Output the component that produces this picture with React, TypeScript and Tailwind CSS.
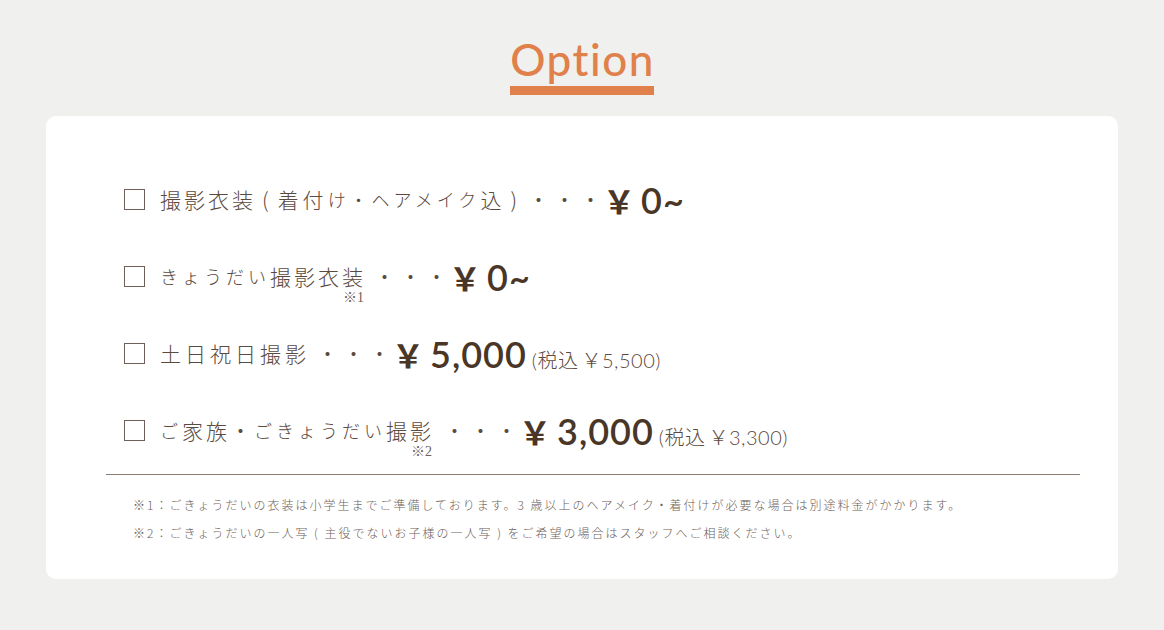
import React from 'react';

const jp = "font-['Noto_Sans_CJK_JP',sans-serif]";
const num = "font-['Lato','Noto_Sans_CJK_JP',sans-serif]";

function Box() {
  return <span className="inline-block w-[21px] h-[21px] border-[1.5px] border-[#6e6058] shrink-0" />;
}

function Note({ mark, children }: { mark: string; children: React.ReactNode }) {
  return (
    <span className="relative">
      {children}
      <span className="absolute right-[2px] top-[30px] text-[14px] leading-none tracking-normal text-[#6e6058] font-['Liberation_Serif','Noto_Sans_CJK_JP',serif]">
        {mark}
      </span>
    </span>
  );
}

function Price({ value, tax }: { value: string; tax?: string }) {
  return (
    <span className="flex items-baseline ml-[2px] tracking-normal">
      <span className={`${num} text-[32px] font-bold text-[#4a3626]`}>￥</span>
      <span className={`${num} text-[36px] font-semibold text-[#4a3626] tracking-[1px] ml-[6px]`}>{value}</span>
      {tax && (
        <span className={`${num} text-[20px] text-[#5b4a40] ml-[5px] tracking-[0.5px]`}>
          (税込<span className="ml-[3px]">￥</span>{tax})
        </span>
      )}
    </span>
  );
}

function Row({ children }: { children: React.ReactNode }) {
  return (
    <div className="h-[77px] flex items-center">
      <Box />
      <div className={`${jp} ml-[15px] flex items-center text-[21px] font-light text-[#5b4a40] tracking-[3px]`}>
        {children}
      </div>
    </div>
  );
}

const Dots = ({ ml = 'ml-[8px]' }: { ml?: string }) => (
  <span className={`${ml} flex gap-[5px] tracking-normal`}>
    <span>・</span>
    <span>・</span>
    <span>・</span>
  </span>
);
const Sm = ({ children }: { children: React.ReactNode }) => (
  <span className="text-[18px] tracking-[4px]">{children}</span>
);

export default function App() {
  return (
    <div className="w-[1164px] h-[630px] bg-[#f0f0ee] px-[46px]">
      <div className="h-[116px] flex flex-col items-center pt-[34px]">
        <div className="font-['Lato',sans-serif] text-[44px] leading-[50px] font-medium text-[#e0804a] tracking-[1.5px] pl-[1px]">
          Option
        </div>
        <div className="w-[144px] h-[9px] bg-[#e0804a] mt-[2px]" />
      </div>
      <div className="bg-white rounded-[10px] h-[463px] pt-[45px]">
        <div className="pl-[78px]">
          <Row>
            <span>撮影衣装</span>
            <span className="mx-[6px]">(</span>
            <span className="tracking-[4px]">着付</span>
            <Sm>け・ヘアメイク</Sm>
            <span>込</span>
            <span className="mx-[6px]">)</span>
            <Dots ml="ml-[2px]" />
            <Price value="0~" />
          </Row>
          <Row>
            <Sm>きょうだい</Sm>
            <Note mark="※1">撮影衣装</Note>
            <Dots />
            <Price value="0~" />
          </Row>
          <Row>
            <span className="tracking-[4px]">土日祝日撮影</span>
            <Dots ml="ml-[7px]" />
            <Price value="5,000" tax="5,500" />
          </Row>
          <Row>
            <Sm>ご</Sm>
            <span>家族・</span>
            <Sm>ごきょうだい</Sm>
            <Note mark="※2">撮影</Note>
            <Dots ml="ml-[10px]" />
            <Price value="3,000" tax="3,300" />
          </Row>
        </div>
        <div className="ml-[60px] mr-[38px] mt-[5px] border-t border-[#8a7b72]" />
        <div className={`${jp} pl-[87px] pt-[16px] text-[12px] leading-[28px] font-light text-[#6e6058] tracking-[2px]`}>
          <p>※1：ごきょうだいの衣装は小学生までご準備しております。3 歳以上のヘアメイク・着付けが必要な場合は別途料金がかかります。</p>
          <p>※2：ごきょうだいの一人写 ( 主役でないお子様の一人写 ) をご希望の場合はスタッフへご相談ください。</p>
        </div>
      </div>
    </div>
  );
}
